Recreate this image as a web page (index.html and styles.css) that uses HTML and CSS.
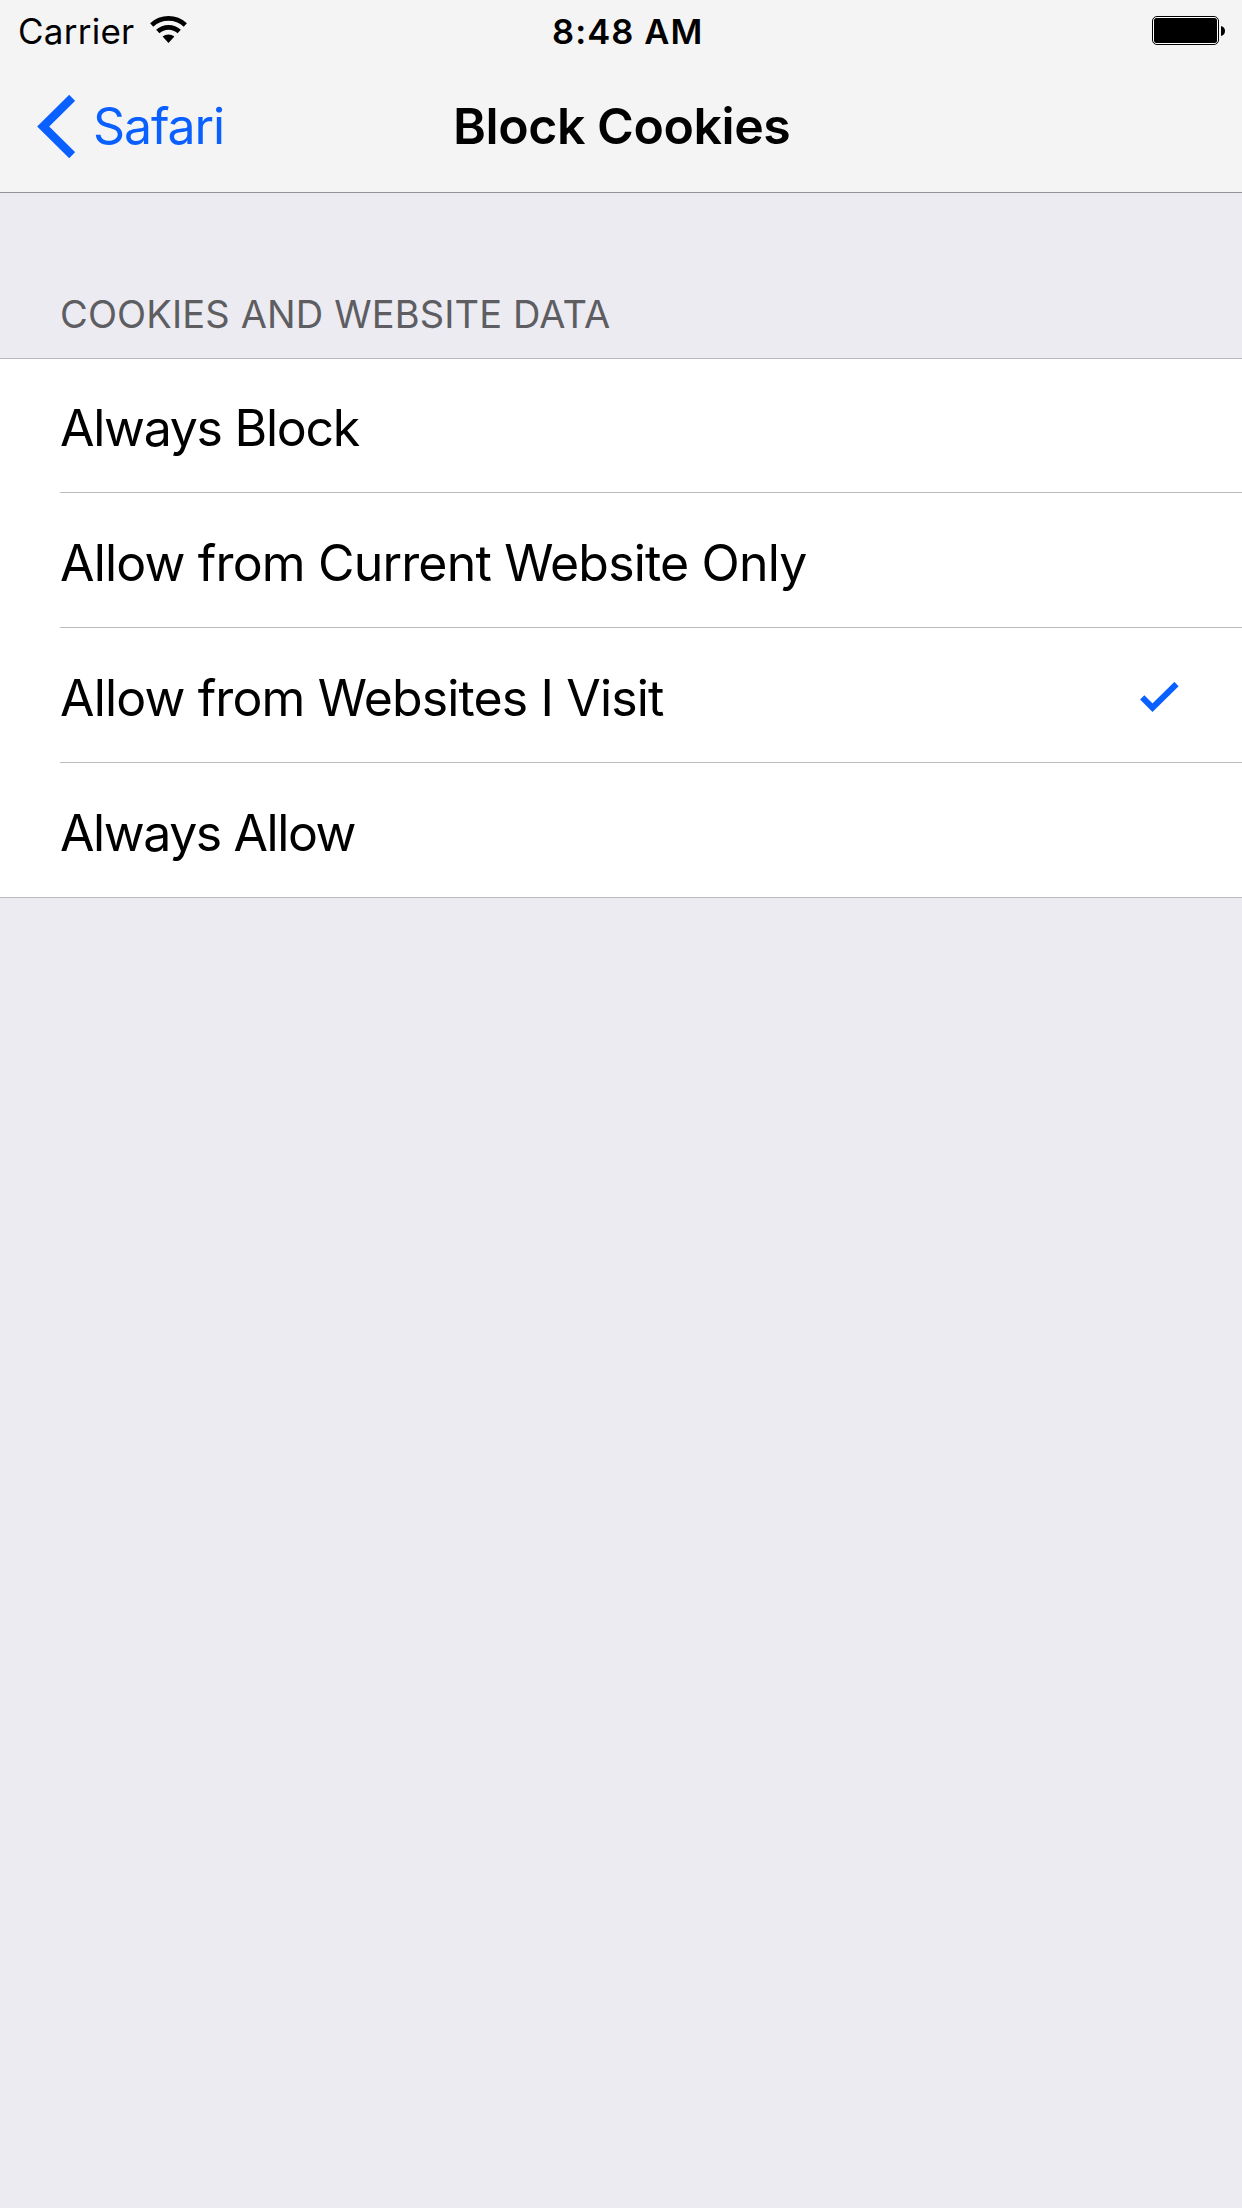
FILE: index.html
```html
<!DOCTYPE html>
<html lang="en">
<head>
<meta charset="utf-8">
<title>Block Cookies</title>
<link rel="stylesheet" href="styles.css">
</head>
<body>
<header class="header">
  <div class="status">
    <div class="carrier"><span class="carrier-name">Carrier</span>
      <svg class="wifi" width="37" height="29" viewBox="0 0 37 29"><g fill="none" stroke="#000"><path stroke-width="4.600" d="M1.700 9a24.700 24.700 0 0 1 33.600 0"/><path stroke-width="4.800" d="M7.800 15.500a15.700 15.700 0 0 1 21.400 0"/></g><path d="M12.600 20.600a9 9 0 0 1 11.800 0L18.500 27z"/></svg>
    </div>
    <span class="time">8:48 AM</span>
    <svg class="battery" width="73" height="29" viewBox="0 0 73 29"><rect x=".5" y=".5" width="66" height="28" rx="4.500" fill="#fff" stroke="#000"/><rect x="2" y="2" width="63" height="25" rx="2.500"/><path d="M69 10q4 1.200 4 5t-4 5z"/></svg>
  </div>
  <nav class="nav">
    <a class="back"><svg class="chevron" width="38" height="63" viewBox="0 0 38 63"><path d="M35.200 2.800 6.200 31.500 35.200 60.200" fill="none" stroke="#0a60ff" stroke-width="8.500"/></svg><span class="back-text">Safari</span></a>
    <h1 class="title">Block Cookies</h1>
  </nav>
</header>
<main>
  <h2 class="section-title">COOKIES AND WEBSITE DATA</h2>
  <ul class="list">
    <li class="row"><span class="label label-block">Always Block</span></li>
    <li class="row"><span class="label label-current">Allow from Current Website Only</span></li>
    <li class="row"><span class="label label-visit">Allow from Websites I Visit</span><svg class="check" width="39" height="30" viewBox="0 0 39 30"><path d="M2.200 15.400 12.500 25.700 36.500 2" fill="none" stroke="#0a60ff" stroke-width="6"/></svg></li>
    <li class="row"><span class="label label-allow">Always Allow</span></li>
  </ul>
</main>
</body>
</html>
```
FILE: styles.css
```css
* { box-sizing: border-box; }
body { margin: 0; min-height: 2208px; background: #ebebf1; color: #000; font-family: Inter, "Liberation Sans", sans-serif; }
h1, h2, ul { margin: 0; padding: 0; list-style: none; font-weight: 400; }
svg { display: block; flex: none; }
span { white-space: nowrap; }
.header { height: 193px; background: #f4f4f5; border-bottom: 1px solid #929297; }
.status { height: 61px; padding: 0 17px 0 18px; display: grid; grid-template-columns: 534px auto 1fr; align-items: center; }
.carrier { display: flex; align-items: center; }
.carrier-name { width: 132px; padding-top: 1px; font-size: 35px; letter-spacing: .25px; }
.time { padding-top: 2px; font-size: 34.5px; font-weight: 600; letter-spacing: 1.1px; }
.battery { justify-self: end; }
.nav { height: 131px; padding-left: 37px; display: grid; grid-template-columns: 416px auto 1fr; align-items: center; font-size: 50px; }
.back { display: flex; align-items: center; gap: 18px; color: #0a60ff; }
.back-text { padding-bottom: 1px; letter-spacing: -1.1px; }
.title { padding-bottom: 1px; font-size: 50px; font-weight: 600; letter-spacing: -.43px; white-space: nowrap; }
.section-title { height: 165px; padding: 98px 0 0 60px; color: #5d5d62; font-size: 38px; line-height: 46px; letter-spacing: .14px; }
.list { background: #fff; border-top: 1px solid #b9b8c0; border-bottom: 1px solid #bcbbc1; }
.row { height: 135px; margin-left: 60px; padding: 5px 63px 0 0; display: flex; align-items: center; justify-content: space-between; font-size: 50px; }
.row:first-child { height: 133px; }
.row + .row { border-top: 1px solid #bcbbc1; }
.check { margin-bottom: 2px; }
.label-block { letter-spacing: -1.28px; }
.label-current { letter-spacing: -.83px; }
.label-visit { letter-spacing: -.85px; }
.label-allow { letter-spacing: -1.42px; }
```
